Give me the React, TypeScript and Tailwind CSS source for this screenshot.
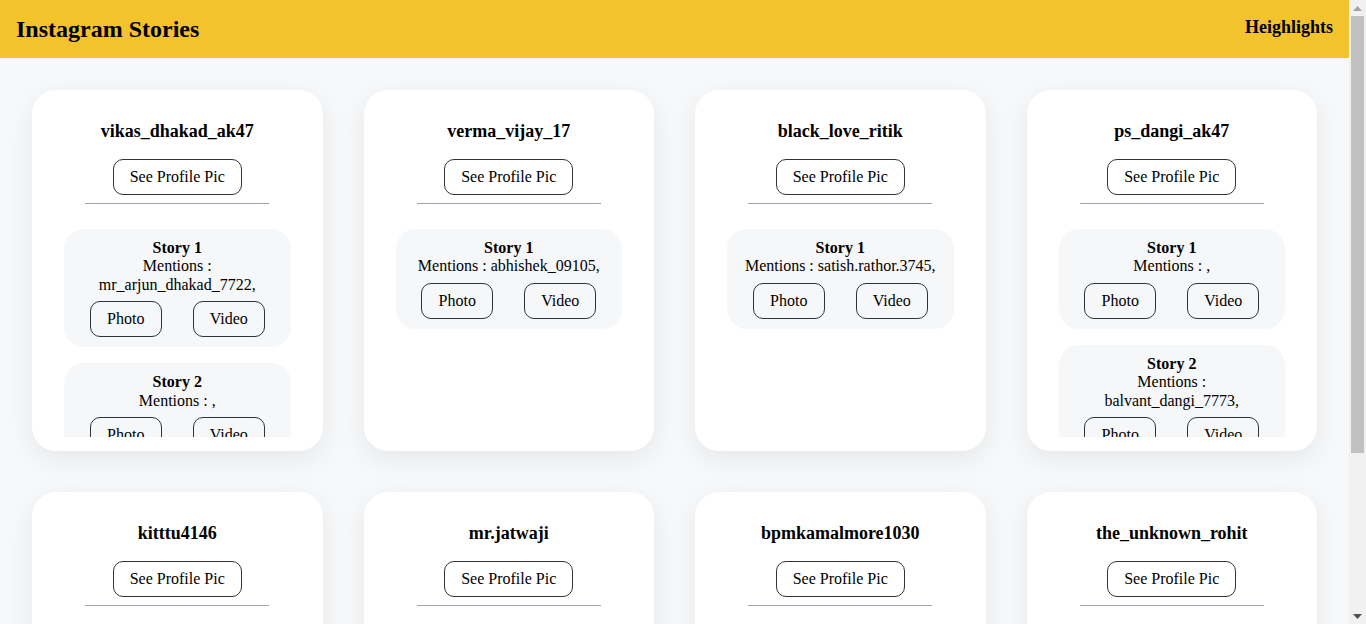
import React from 'react';

type Story = { mentions: string };
type Profile = { username: string; stories: Story[] };

const profiles: Profile[] = [
  { username: 'vikas_dhakad_ak47', stories: [{ mentions: 'mr_arjun_dhakad_7722,' }, { mentions: ',' }] },
  { username: 'verma_vijay_17', stories: [{ mentions: 'abhishek_09105,' }] },
  { username: 'black_love_ritik', stories: [{ mentions: 'satish.rathor.3745,' }] },
  { username: 'ps_dangi_ak47', stories: [{ mentions: ',' }, { mentions: 'balvant_dangi_7773,' }] },
  { username: 'kitttu4146', stories: [{ mentions: ',' }] },
  { username: 'mr.jatwaji', stories: [{ mentions: ',' }] },
  { username: 'bpmkamalmore1030', stories: [{ mentions: ',' }] },
  { username: 'the_unknown_rohit', stories: [{ mentions: ',' }] },
];

const StoryCard: React.FC<{ index: number; story: Story }> = ({ index, story }) => (
  <div className="bg-[#f6f7f9] rounded-[20px] pt-[10px] pb-[10px] px-[16px] text-center text-[16px] leading-[18.4px]">
    <div className="font-bold">Story {index + 1}</div>
    <div>Mentions : {story.mentions}</div>
    <div className="flex justify-center gap-[31px] mt-[7px]">
      <button className="w-[72px] h-[36px] border border-[#333] rounded-[10px] bg-transparent">Photo</button>
      <button className="w-[72px] h-[36px] border border-[#333] rounded-[10px] bg-transparent">Video</button>
    </div>
  </div>
);

const ProfileCard: React.FC<{ profile: Profile }> = ({ profile }) => (
  <div className="bg-white rounded-[24px] h-[361px] flex flex-col items-center pt-[28px] shadow-[0_8px_28px_rgba(0,0,0,0.07)]">
    <h3 className="text-[18px] font-bold leading-[27px]">{profile.username}</h3>
    <button className="mt-[14px] w-[129px] h-[36px] border border-[#333] rounded-[10px] text-[16px]">
      See Profile Pic
    </button>
    <div className="mt-[8px] w-[184px] h-px bg-[#9ca3af]" />
    <div className="flex-1 w-full overflow-hidden px-[32px] pt-[25px] mb-[14px] flex flex-col gap-[16px]">
      {profile.stories.map((s, i) => (
        <StoryCard key={i} index={i} story={s} />
      ))}
    </div>
  </div>
);

// window scrollbar as seen in the screenshot
const Scrollbar: React.FC = () => (
  <div className="w-[17px] shrink-0 bg-[#f1f1f1] flex flex-col items-center">
    <div className="h-[16px] flex items-center justify-center">
      <svg width="9" height="5" viewBox="0 0 9 5"><path d="M4.5 0L9 5H0z" fill="#a3a3a3" /></svg>
    </div>
    <div className="w-[13px] h-[437px] bg-[#c1c1c1]" />
    <div className="flex-1" />
    <div className="h-[16px] flex items-center justify-center">
      <svg width="9" height="5" viewBox="0 0 9 5"><path d="M0 0h9L4.5 5z" fill="#505050" /></svg>
    </div>
  </div>
);

const App: React.FC = () => {
  return (
    <div className="h-screen flex overflow-hidden text-black font-['Liberation_Serif','Times_New_Roman',serif]">
      <div className="flex-1 min-w-0 bg-[#f7f8fa] overflow-hidden">
        {/* Header */}
        <div className="h-[58px] bg-[#f3c32e] flex items-center justify-between px-[16px]">
          <h1 className="text-[24px] font-bold">Instagram Stories</h1>
          <span className="text-[18px] font-bold -mt-[4px]">Heighlights</span>
        </div>

        {/* Cards */}
        <div className="grid grid-cols-4 gap-[41px] px-[32px] py-[32px]">
          {profiles.map((p) => (
            <ProfileCard key={p.username} profile={p} />
          ))}
        </div>
      </div>
      <Scrollbar />
    </div>
  );
};

export default App;
